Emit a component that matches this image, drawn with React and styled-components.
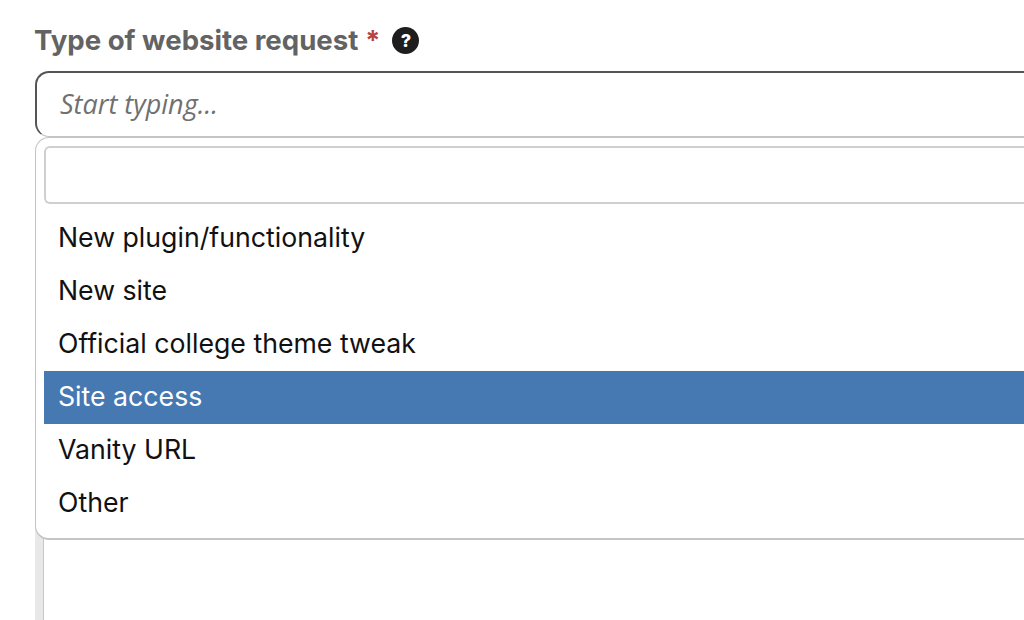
import styled, { createGlobalStyle } from 'styled-components'

const options = [
  'New plugin/functionality',
  'New site',
  'Official college theme tweak',
  'Site access',
  'Vanity URL',
  'Other',
]

const GlobalStyle = createGlobalStyle`
  html, body {
    margin: 0;
    height: 100%;
    background: #fff;
    overflow: hidden;
  }
`

const Page = styled.main`
  width: 1100px;
  height: 620px;
  padding: 24px 0 0 35px;
  box-sizing: border-box;
  font-family: Inter, "Noto Sans", sans-serif;
`

const LabelRow = styled.div`
  display: flex;
  align-items: center;
  height: 32px;
  margin: 0 0 15px -1px;
`

const Label = styled.label`
  font-size: 27.6px;
  font-weight: 700;
  color: #636363;
`

const Required = styled.span`
  color: #b8423e;
  font-size: 27px;
  font-weight: 700;
  margin-left: 7px;
`

const HelpBadge = styled.span`
  display: flex;
  align-items: center;
  justify-content: center;
  width: 27px;
  height: 27px;
  margin-left: 12px;
  border-radius: 50%;
  background: #1f1e1e;
  color: #fff;
  font-size: 18px;
  font-weight: 800;
`

const Field = styled.div`
  position: relative;
`

const Combo = styled.div`
  height: 66px;
  box-sizing: border-box;
  display: flex;
  align-items: center;
  padding: 0 0 3px 23px;
  border: 1px solid #c4c4c4;
  border-top: 2px solid #555;
  border-left: 2px solid #555;
  border-radius: 14px 0 0 14px;
  font-family: "Open Sans", sans-serif;
  font-style: italic;
  font-size: 27px;
  color: #707070;
`

const Editor = styled.div`
  height: 463px;
  margin-top: 20px;
  box-sizing: border-box;
  background: #fff;
  border-left: 8px solid #e8e8e8;
  box-shadow: inset 1px 0 0 #c8c8c8;
`

const Dropdown = styled.div`
  position: absolute;
  top: 66px;
  left: 0;
  right: 0;
  height: 403px;
  box-sizing: border-box;
  padding: 8px 0 0 8px;
  background: #fff;
  border: 2px solid #c4c4c4;
  border-right: 0;
  border-left-width: 1px;
  border-top-width: 1px;
  border-radius: 14px 0 0 14px;
`

const Search = styled.input`
  display: block;
  width: 100%;
  height: 58px;
  box-sizing: border-box;
  margin-bottom: 8px;
  border: 2px solid #cfcfcf;
  border-right: 0;
  border-radius: 6px 0 0 6px;
  outline: none;
  background: #fff;
`

const Option = styled.div`
  height: 53px;
  display: flex;
  align-items: center;
  padding: 0 0 3px 14px;
  box-sizing: border-box;
  font-size: 26.7px;
  color: ${(p) => (p.$active ? '#fff' : '#111')};
  background: ${(p) => (p.$active ? '#4678b2' : 'transparent')};
`

export default function App() {
  return (
    <Page>
      <GlobalStyle />
      <LabelRow>
        <Label>Type of website request</Label>
        <Required>*</Required>
        <HelpBadge>?</HelpBadge>
      </LabelRow>
      <Field>
        <Combo>Start typing...</Combo>
        <Editor />
        <Dropdown>
          <Search />
          {options.map((o) => (
            <Option key={o} $active={o === 'Site access'}>{o}</Option>
          ))}
        </Dropdown>
      </Field>
    </Page>
  )
}
